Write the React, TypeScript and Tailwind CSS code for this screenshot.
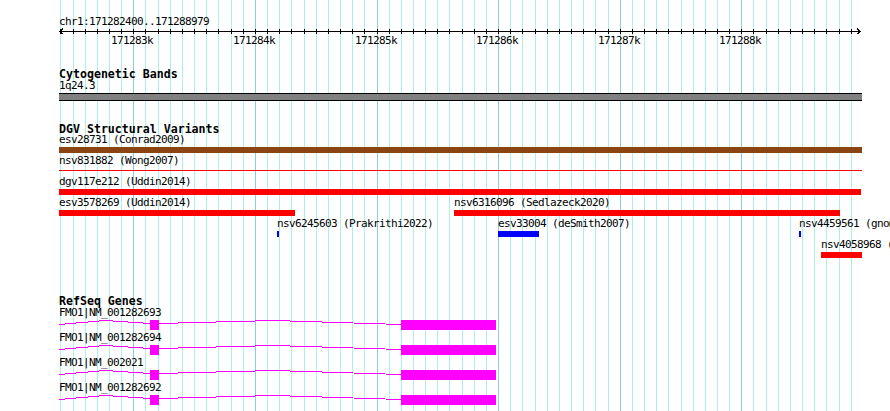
import React from 'react';

// track area: page x 59 -> 862
const TRACK_W = 803;

const grid = Array.from({ length: 66 }, (_, k) => ({
  x: Math.round(1.34 + 12.16 * k),
  major: (k + 4) % 10 === 0,
}));

const majorLabels = grid
  .filter((g) => g.major)
  .map((g, i) => ({ x: g.x, text: `${171283 + i}k` }));

type Variant = {
  name: string;
  x: number;
  w: number;
  color: 'brown' | 'red' | 'blue';
  thin?: boolean;
};

const barColors = {
  brown: 'bg-[#8b4513]',
  red: 'bg-[#ff0000]',
  blue: 'bg-[#0000ff]',
};

const dgvRows: Variant[][] = [
  [{ name: 'esv28731 (Conrad2009)', x: 0, w: 803, color: 'brown' }],
  [{ name: 'nsv831882 (Wong2007)', x: 0, w: 803, color: 'red', thin: true }],
  [{ name: 'dgv117e212 (Uddin2014)', x: 0, w: 802, color: 'red' }],
  [
    { name: 'esv3578269 (Uddin2014)', x: 0, w: 236, color: 'red' },
    { name: 'nsv6316096 (Sedlazeck2020)', x: 395, w: 386, color: 'red' },
  ],
  [
    { name: 'nsv6245603 (Prakrithi2022)', x: 218, w: 2, color: 'blue' },
    { name: 'esv33004 (deSmith2007)', x: 439, w: 41, color: 'blue' },
    { name: 'nsv4459561 (gnomAD)', x: 740, w: 2, color: 'blue' },
  ],
  [{ name: 'nsv4058968 (Coe2014)', x: 762, w: 41, color: 'red' }],
];

const transcripts = ['FMO1|NM_001282693', 'FMO1|NM_001282694', 'FMO1|NM_002021', 'FMO1|NM_001282692'];

// small label text: 6px per char like the gd font
const small = 'text-[11px] tracking-[-0.62px] whitespace-nowrap';

function GridLines() {
  return (
    <svg className="absolute left-[59px] top-0" width={TRACK_W} height={411} shapeRendering="crispEdges">
      {grid.map((g) => (
        <rect key={g.x} x={g.x} y={0} width={1} height={411} fill={g.major ? '#8ecae8' : '#aeeeee'} />
      ))}
    </svg>
  );
}

function Ruler() {
  return (
    <div className="flex flex-col">
      <div className={`h-[13px] leading-[13px] ${small}`}>chr1:171282400..171288979</div>
      <svg className="block" width={TRACK_W} height={6} shapeRendering="crispEdges">
        <line x1={1} y1={3.5} x2={801} y2={3.5} stroke="#000" />
        {grid.map((g) => (
          <line key={g.x} x1={g.x + 0.5} y1={1} x2={g.x + 0.5} y2={6} stroke="#000" />
        ))}
        <polyline points="4,0.5 1,3.5 4,6.5" fill="none" stroke="#000" />
        <polyline points="798,0.5 801,3.5 798,6.5" fill="none" stroke="#000" />
      </svg>
      <div className="relative h-[13px]">
        {majorLabels.map((l) => (
          <span key={l.text} className={`absolute top-0 leading-[13px] ${small}`} style={{ left: l.x - 22 }}>
            {l.text}
          </span>
        ))}
      </div>
    </div>
  );
}

function Heading({ children, className = '' }: { children: React.ReactNode; className?: string }) {
  return <div className={`text-[11.6px] font-bold whitespace-nowrap ${className}`}>{children}</div>;
}

function VariantRow({ items }: { items: Variant[] }) {
  return (
    <div className="relative h-[21px]">
      {items.map((v) => (
        <div key={v.name} className="absolute top-0 flex flex-col" style={{ left: v.x }}>
          <div className={`h-[11px] leading-[10px] ${small}`}>{v.name}</div>
          {v.thin ? (
            <div className="flex h-[7px] flex-col pt-[3px]">
              <div className={`h-px ${barColors[v.color]}`} style={{ width: v.w }} />
            </div>
          ) : (
            <div className={`mt-px h-[6px] ${barColors[v.color]}`} style={{ width: v.w }} />
          )}
        </div>
      ))}
    </div>
  );
}

function GeneRow({ name }: { name: string }) {
  return (
    <div className="flex h-[25px] flex-col gap-px">
      <div className={`h-[11px] leading-[10px] ${small}`}>{name}</div>
      <svg className="block" width={TRACK_W} height={10} shapeRendering="crispEdges">
        <polyline points="0,4.5 46,0.5 91,3.5" fill="none" stroke="#ff00ff" />
        <polyline points="100,3.5 215,0.5 342,4.5" fill="none" stroke="#ff00ff" />
        <rect x={91} y={0} width={9} height={10} fill="#ff00ff" />
        <rect x={342} y={0} width={95} height={10} fill="#ff00ff" />
      </svg>
    </div>
  );
}

export default function App() {
  return (
    <div className="relative h-[411px] w-[890px] overflow-hidden bg-white text-black font-['DejaVu_Sans_Mono',monospace]">
      <GridLines />
      <div className="relative flex w-[862px] flex-col pl-[59px] pt-[15px]">
        <Ruler />

        <section className="mt-[21px] flex flex-col">
          <Heading className="h-[12px] leading-[12px]">Cytogenetic Bands</Heading>
          <div className={`h-[13px] leading-[12px] ${small}`}>1q24.3</div>
          {/* band ideogram: 1q24.3 is a gpos band, fills the whole view */}
          <svg className="block" width={TRACK_W} height={8} shapeRendering="crispEdges">
            <rect x={0} y={0} width={TRACK_W} height={8} fill="#000000" />
            <rect x={0} y={1} width={TRACK_W} height={6} fill="#808080" />
          </svg>
        </section>

        <section className="mt-[22px] flex flex-col">
          <Heading className="h-[12px] leading-[12px]">DGV Structural Variants</Heading>
          {dgvRows.map((row, i) => (
            <VariantRow key={i} items={row} />
          ))}
        </section>

        <section className="mt-[34px] flex flex-col">
          <Heading className="h-[13px] leading-[13px]">RefSeq Genes</Heading>
          {transcripts.map((t) => (
            <GeneRow key={t} name={t} />
          ))}
        </section>
      </div>
    </div>
  );
}
